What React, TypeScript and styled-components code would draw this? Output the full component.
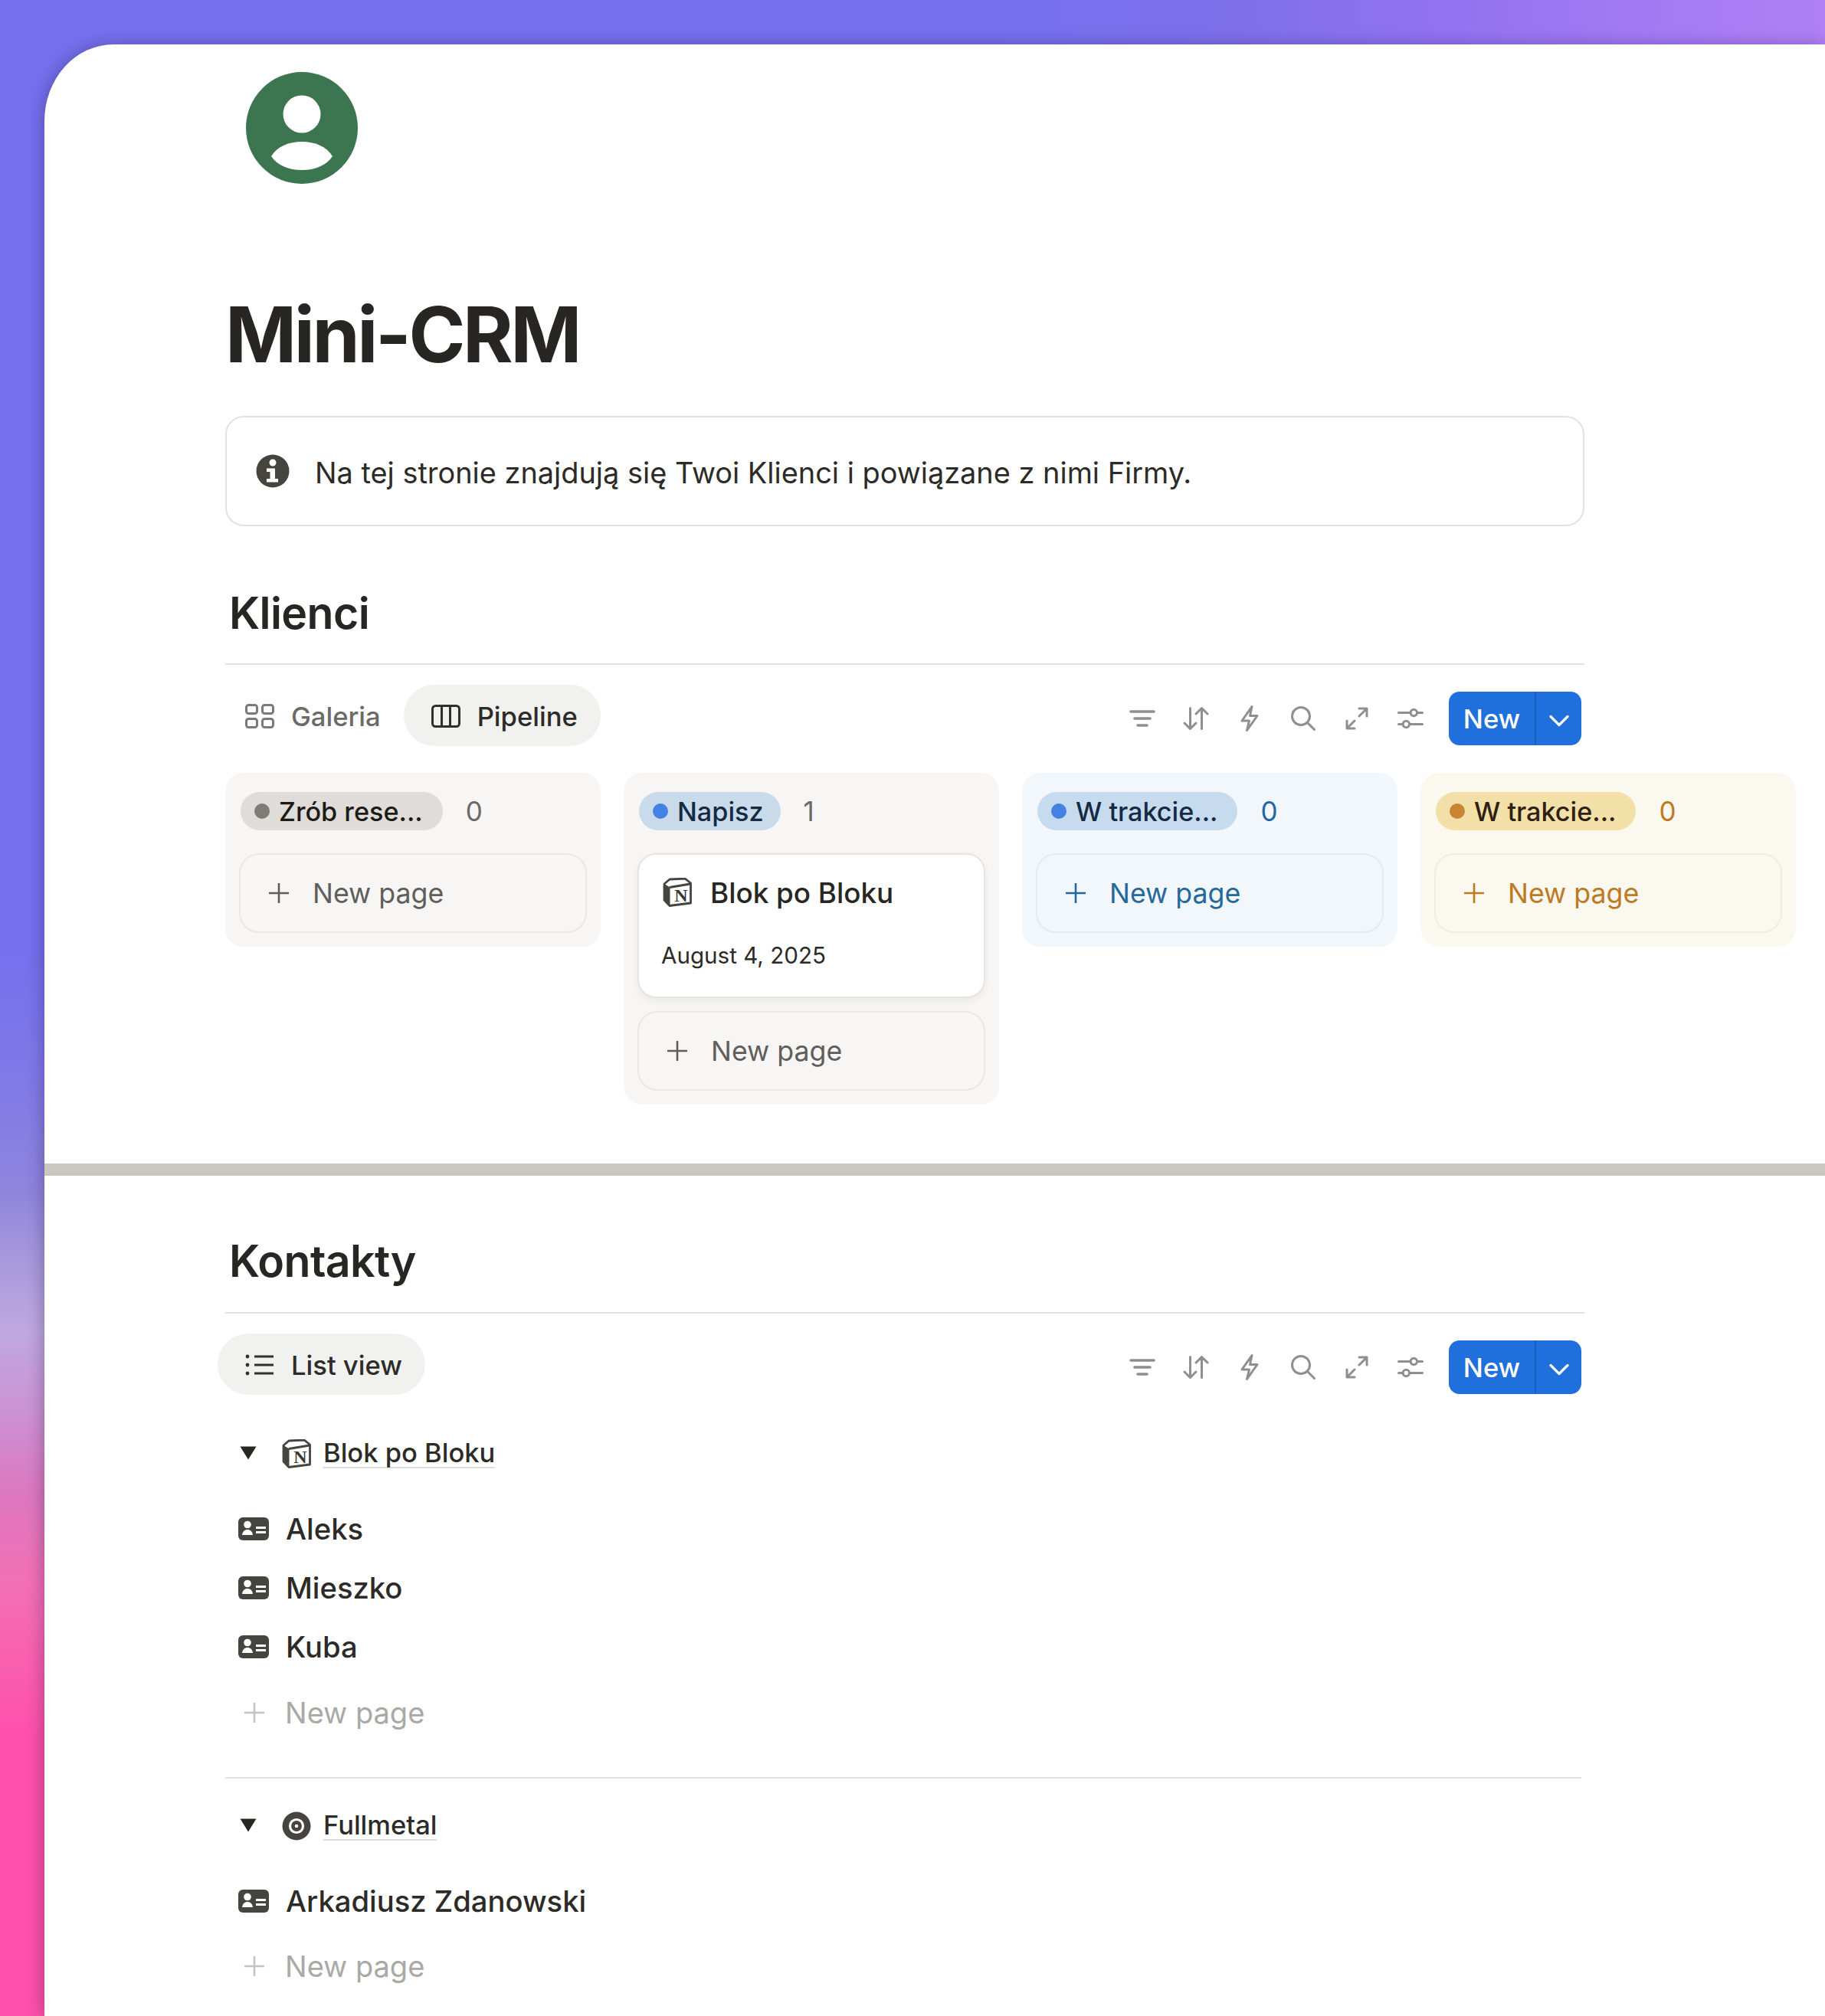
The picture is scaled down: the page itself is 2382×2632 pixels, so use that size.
import React from "react";
import styled, { createGlobalStyle } from "styled-components";

const Global = createGlobalStyle`
  html, body { margin: 0; padding: 0; }
  body { font-family: Inter, "Liberation Sans", sans-serif; color: #272622; -webkit-font-smoothing: antialiased; }
  * { box-sizing: border-box; }
`;

const Page = styled.div`
  width: 2382px;
  height: 2632px;
  padding: 58px 0 0 58px;
  overflow: hidden;
  background-color: #7570ee;
  background-image:
    linear-gradient(90deg, #7570ee 0%, #7570ee 55%, #7f6feb 68%, #9373f1 80%, #a67bf4 92%, #b080f4 100%),
    linear-gradient(180deg, #7570ee 0%, #7570ee 47%, #7f78e8 53%, #8f84dd 59%, #a496dc 62%, #bfa8e0 66%, #cc92d4 70%, #dc78bf 74%, #f36fb5 78.6%, #ff50ab 86%, #ff50ab 100%);
  background-size: 100% 58px, 100% 100%;
  background-repeat: no-repeat;
`;

const Panel = styled.main`
  height: 2574px;
  background: #fff;
  border-top-left-radius: 90px 100px;
  box-shadow: -3px 0 20px rgba(30, 20, 60, 0.3);
  overflow: hidden;
`;

const Block = styled.section`
  padding-left: 236px;
  width: 2324px;
`;

const Avatar = styled.svg`
  display: block;
  width: 146px;
  height: 146px;
  margin: 36px 0 0 27px;
`;

const Title = styled.h1`
  margin: 137px 0 0 0;
  font-size: 100px;
  line-height: 120px;
  font-weight: 700;
  letter-spacing: -3.4px;
  color: #272622;
`;

const Callout = styled.div`
  display: flex;
  align-items: center;
  width: 1774px;
  height: 144px;
  margin-top: 46px;
  padding-left: 38px;
  gap: 33px;
  border: 2px solid #e3e2e0;
  border-radius: 24px;
  font-size: 37.9px;
  color: #2c2b27;
`;

const CalloutText = styled.span`
  padding-top: 3px;
`;

const Heading = styled.h2`
  margin: ${(p: { $top: number }) => p.$top}px 0 0 5px;
  font-size: 57.2px;
  line-height: 80px;
  font-weight: 600;
  letter-spacing: -0.6px;
  color: #272622;
`;

const Rule = styled.div<{ $w?: number; $top: number }>`
  width: ${(p) => p.$w ?? 1774}px;
  height: 2px;
  margin-top: ${(p) => p.$top}px;
  background: #e3e2e0;
`;

const ViewBar = styled.div`
  display: flex;
  align-items: flex-start;
  width: 1774px;
  height: 80px;
  margin-top: 26px;
  padding-right: 4px;
`;

const Tab = styled.div<{ $active?: boolean }>`
  display: flex;
  align-items: center;
  gap: 22px;
  height: 80px;
  padding: 2px 30px 0 36px;
  border-radius: 40px;
  font-size: 34.6px;
  font-weight: 500;
  color: ${(p) => (p.$active ? "#2c2b27" : "#6b6a66")};
  background: ${(p) => (p.$active ? "#f1f1f0" : "transparent")};
  &:first-child { margin-left: -10px; }
`;

const Actions = styled.div`
  display: flex;
  align-items: center;
  margin: 9px 0 0 auto;
  height: 70px;
`;

const ToolIcon = styled.svg`
  display: block;
  width: 36px;
  height: 36px;
  margin: 0 17px;
  fill: none;
  stroke: #8f8f8d;
  stroke-width: 3;
  stroke-linecap: round;
  stroke-linejoin: round;
`;

const NewButton = styled.div`
  display: flex;
  align-items: stretch;
  width: 173px;
  height: 70px;
  margin-left: 15px;
  border-radius: 14px;
  background: #1f6fdc;
  color: #fff;
  font-size: 34.5px;
  font-weight: 500;
`;

const NewLabel = styled.div`
  display: flex;
  align-items: center;
  justify-content: center;
  width: 114px;
  border-right: 2px solid #1b5fbc;
`;

const NewCaret = styled.div`
  display: flex;
  flex: 1;
  align-items: center;
  justify-content: center;
  padding-top: 5px;
`;

const Board = styled.div`
  display: flex;
  align-items: flex-start;
  gap: 30px;
  margin-top: 35px;
`;

const Column = styled.div<{ $bg: string }>`
  flex: none;
  width: 490px;
  padding: 25px 18px 18px;
  border-radius: 24px;
  background: ${(p) => p.$bg};
`;

const ColumnHead = styled.div`
  display: flex;
  align-items: center;
  gap: 30px;
  height: 50px;
  margin: 0 0 30px 2px;
`;

const Tag = styled.div<{ $bg: string; $fg: string; $end: number }>`
  display: flex;
  align-items: center;
  gap: 12px;
  height: 50px;
  padding: 0 ${(p) => p.$end}px 0 18px;
  border-radius: 25px;
  background: ${(p) => p.$bg};
  color: ${(p) => p.$fg};
  font-size: 34.2px;
  font-weight: 500;
  white-space: nowrap;
`;

const Dot = styled.span<{ $c: string }>`
  flex: none;
  width: 20px;
  height: 20px;
  border-radius: 50%;
  background: ${(p) => p.$c};
`;

const Count = styled.span<{ $c: string }>`
  color: ${(p) => p.$c};
  font-size: 35px;
`;

const Card = styled.div`
  height: 189px;
  margin-bottom: 17px;
  padding: 26px 0 0 29px;
  border: 2px solid #e6e5e3;
  border-radius: 24px;
  background: #fff;
  box-shadow: 0 4px 10px rgba(40, 35, 25, 0.06);
`;

const CardTitle = styled.div`
  display: flex;
  align-items: center;
  gap: 8px;
  height: 46px;
  padding-left: 2px;
  font-size: 36.8px;
  font-weight: 500;
  color: #272622;
`;

const CardDate = styled.div`
  margin-top: 39px;
  font-size: 29.6px;
  line-height: 40px;
  color: #2c2b27;
`;

const AddCard = styled.div<{ $fg: string; $line: string }>`
  display: flex;
  align-items: center;
  gap: 31px;
  height: 104px;
  padding-left: 37px;
  border: 2px solid ${(p) => p.$line};
  border-radius: 26px;
  color: ${(p) => p.$fg};
  font-size: 35.7px;
`;

const Plus = styled.svg<{ $c: string }>`
  display: block;
  flex: none;
  width: 26px;
  height: 26px;
  stroke: ${(p) => p.$c};
  stroke-width: 2.6;
  fill: none;
`;

const Divider = styled.div`
  height: 16px;
  margin-top: 77px;
  background: #c9c7bf;
`;

const GroupRow = styled.div<{ $top: number }>`
  display: flex;
  align-items: center;
  height: 60px;
  margin-top: ${(p) => p.$top}px;
  padding-left: 19px;
  font-size: 34.5px;
  font-weight: 500;
  color: #2c2b27;
`;

const Caret = styled.svg`
  display: block;
  flex: none;
  width: 22px;
  height: 18px;
  margin: -3px 33px 0 0;
  fill: #272622;
`;

const GroupIcon = styled.svg`
  display: block;
  flex: none;
  width: 38px;
  height: 38px;
  margin-right: 16px;
`;

const GroupName = styled.span`
  line-height: 36px;
  border-bottom: 2px solid #dcdcda;
`;

const Item = styled.div<{ $top?: number }>`
  display: flex;
  align-items: center;
  gap: 22px;
  height: 77px;
  margin-top: ${(p) => p.$top ?? 0}px;
  padding-left: 17px;
  font-size: 38.2px;
  font-weight: 500;
  color: #2c2b27;
`;

const AddRow = styled.div<{ $top: number }>`
  display: flex;
  align-items: center;
  gap: 27px;
  height: 77px;
  margin-top: ${(p) => p.$top}px;
  padding-left: 25px;
  font-size: 38px;
  color: #a9a9a6;
`;

const CardIcon = () => (
  <svg width="40" height="30" viewBox="0 0 40 30" style={{ display: "block", flex: "none" }}>
    <rect width="40" height="30" rx="6" fill="#45443f" />
    <circle cx="12" cy="9.5" r="4.8" fill="#fff" />
    <path d="M5 23c.6-4.5 3.4-7 7-7s6.400 2.500 7 7z" fill="#fff" />
    <rect x="23" y="12" width="13" height="3" fill="#fff" />
    <rect x="23" y="18" width="13" height="3" fill="#fff" />
  </svg>
);

const NotionLogo = () => (
  <GroupIcon viewBox="0 0 38 38">
    <path d="M2 8 9 2 29 1 36.500 7V33L9 36.500 2 29Z" fill="#fff" stroke="#45443f" strokeWidth="2.800" strokeLinejoin="round" />
    <path d="M2 8 9.500 12.500V36.500L2 29Z" fill="#45443f" />
    <path d="M9 12.500 36 8" stroke="#45443f" strokeWidth="2.800" fill="none" />
    <text x="24" y="31" textAnchor="middle" fontFamily="'Liberation Serif', serif" fontWeight="700" fontSize="24" fill="#3a3935">N</text>
  </GroupIcon>
);

const TargetIcon = () => (
  <GroupIcon viewBox="0 0 38 38">
    <circle cx="19" cy="19" r="18.500" fill="#45443f" />
    <circle cx="19" cy="19" r="8.500" fill="none" stroke="#fff" strokeWidth="3.200" />
    <circle cx="19" cy="19" r="2.300" fill="#fff" />
  </GroupIcon>
);

const DownCaret = () => (
  <Caret viewBox="0 0 22 18">
    <path d="M0.500 0.500H21.500L11 17.500Z" />
  </Caret>
);

const PlusIcon = ({ c }: { c: string }) => (
  <Plus viewBox="0 0 26 26" $c={c}>
    <path d="M13 0V26M0 13H26" />
  </Plus>
);

const Toolbar = () => (
  <Actions>
    <ToolIcon viewBox="0 0 36 36">
      <path d="M3 9H33M8 18H28M12 27H24" strokeWidth="3.600" />
    </ToolIcon>
    <ToolIcon viewBox="0 0 36 36">
      <path d="M10.500 4.500V31.500M3 24l7.500 7.500L18 24M25.500 31.500V4.500M18 12l7.500-7.500L33 12" />
    </ToolIcon>
    <ToolIcon viewBox="0 0 36 36">
      <path d="M21 2.500 8 21h9.500L14.500 33.500 28 14.500h-9.500Z" />
    </ToolIcon>
    <ToolIcon viewBox="0 0 36 36">
      <circle cx="15" cy="15" r="11.500" />
      <path d="M24 24 32.500 32.500" />
    </ToolIcon>
    <ToolIcon viewBox="0 0 36 36">
      <path d="M21 5H31V15M31 5 21 15M15 31H5V21M5 31 15 21" />
    </ToolIcon>
    <ToolIcon viewBox="0 0 36 36">
      <path d="M2.500 10.500H18M26.500 10.500H33.500M2.500 25.500H8M16.500 25.500H33.500" />
      <circle cx="22.300" cy="10.500" r="4.200" />
      <circle cx="12.300" cy="25.500" r="4.200" />
    </ToolIcon>
    <NewButton>
      <NewLabel>New</NewLabel>
      <NewCaret>
        <svg width="26" height="16" viewBox="0 0 26 16" fill="none" stroke="#fff" strokeWidth="3.200" strokeLinecap="round" strokeLinejoin="round">
          <path d="M2 2.500 13 13.500 24 2.500" />
        </svg>
      </NewCaret>
    </NewButton>
  </Actions>
);

const columns = [
  { bg: "#f7f6f4", tagBg: "#dfdcd9", tagFg: "#1d1b16", dot: "#7f7b75", label: "Zrób rese...", end: 26, count: "0", countC: "#6b6a67", fg: "#5f5e5b", line: "#e9e8e6" },
  { bg: "#f7f6f4", tagBg: "#c9dbea", tagFg: "#152a44", dot: "#4481e5", label: "Napisz", end: 22, count: "1", countC: "#6b6a67", fg: "#5f5e5b", line: "#e9e8e6", card: true },
  { bg: "#f2f7fb", tagBg: "#c6dbee", tagFg: "#152a44", dot: "#4481e5", label: "W trakcie...", end: 26, count: "0", countC: "#23679f", fg: "#25689b", line: "#e0ebf4" },
  { bg: "#fbf9ef", tagBg: "#f3dfa8", tagFg: "#2f2112", dot: "#c98434", label: "W trakcie...", end: 26, count: "0", countC: "#bd7a23", fg: "#bd7a23", line: "#f3ecdd" },
];

export default function App() {
  return (
    <Page>
      <Global />
      <Panel>
        <Block>
          <Avatar viewBox="0 0 146 146">
            <circle cx="73" cy="73" r="73" fill="#3b7651" />
            <circle cx="73" cy="55" r="24.500" fill="#fff" />
            <path d="M33 110C41 97 56 91 73 91S105 97 113 110C105 122 90 128 73 128S41 122 33 110Z" fill="#fff" />
          </Avatar>
          <Title>Mini-CRM</Title>
          <Callout>
            <svg width="44" height="44" viewBox="0 0 44 44" style={{ flex: "none" }}>
              <circle cx="22" cy="22" r="21.500" fill="#45443f" />
              <circle cx="22" cy="11" r="4.500" fill="#fff" />
              <path d="M14 18.500h11v13.500h4v4.500H14V32h4.500v-9H14z" fill="#fff" />
            </svg>
            <CalloutText>Na tej stronie znajdują się Twoi Klienci i powiązane z nimi Firmy.</CalloutText>
          </Callout>
          <Heading $top={74}>Klienci</Heading>
          <Rule $top={25} />
          <ViewBar>
            <Tab>
              <svg width="38" height="32" viewBox="0 0 38 32" fill="none" stroke="#7b7a77" strokeWidth="3">
                <rect x="1.500" y="1.500" width="14" height="11" rx="3" />
                <rect x="22.500" y="1.500" width="14" height="11" rx="3" />
                <rect x="1.500" y="19.500" width="14" height="11" rx="3" />
                <rect x="22.500" y="19.500" width="14" height="11" rx="3" />
              </svg>
              Galeria
            </Tab>
            <Tab $active>
              <svg width="38" height="30" viewBox="0 0 38 30" fill="none" stroke="#32302c" strokeWidth="3">
                <rect x="1.500" y="1.500" width="35" height="27" rx="4" />
                <path d="M13.500 1.500V28.500M24.500 1.500V28.500" />
              </svg>
              Pipeline
            </Tab>
            <Toolbar />
          </ViewBar>
          <Board>
            {columns.map((c, i) => (
              <Column key={i} $bg={c.bg}>
                <ColumnHead>
                  <Tag $bg={c.tagBg} $fg={c.tagFg} $end={c.end}>
                    <Dot $c={c.dot} />
                    {c.label}
                  </Tag>
                  <Count $c={c.countC}>{c.count}</Count>
                </ColumnHead>
                {c.card && (
                  <Card>
                    <CardTitle>
                      <NotionLogo />
                      Blok po Bloku
                    </CardTitle>
                    <CardDate>August 4, 2025</CardDate>
                  </Card>
                )}
                <AddCard $fg={c.fg} $line={c.line}>
                  <PlusIcon c={c.fg} />
                  New page
                </AddCard>
              </Column>
            ))}
          </Board>
        </Block>
        <Divider />
        <Block>
          <Heading $top={72}>Kontakty</Heading>
          <Rule $top={26} />
          <ViewBar>
            <Tab $active>
              <svg width="38" height="28" viewBox="0 0 38 28" fill="none" stroke="#32302c" strokeWidth="3">
                <path d="M12 3H37M12 14H37M12 25H37" />
                <circle cx="3" cy="3" r="2.400" fill="#32302c" stroke="none" />
                <circle cx="3" cy="14" r="2.400" fill="#32302c" stroke="none" />
                <circle cx="3" cy="25" r="2.400" fill="#32302c" stroke="none" />
              </svg>
              List view
            </Tab>
            <Toolbar />
          </ViewBar>
          <GroupRow $top={47}>
            <DownCaret />
            <NotionLogo />
            <GroupName>Blok po Bloku</GroupName>
          </GroupRow>
          <Item $top={29}><CardIcon />Aleks</Item>
          <Item><CardIcon />Mieszko</Item>
          <Item><CardIcon />Kuba</Item>
          <AddRow $top={9}><PlusIcon c="#c4c4c1" />New page</AddRow>
          <Rule $w={1770} $top={46} />
          <GroupRow $top={32}>
            <DownCaret />
            <TargetIcon />
            <GroupName>Fullmetal</GroupName>
          </GroupRow>
          <Item $top={29}><CardIcon />Arkadiusz Zdanowski</Item>
          <AddRow $top={8}><PlusIcon c="#c4c4c1" />New page</AddRow>
        </Block>
      </Panel>
    </Page>
  );
}
